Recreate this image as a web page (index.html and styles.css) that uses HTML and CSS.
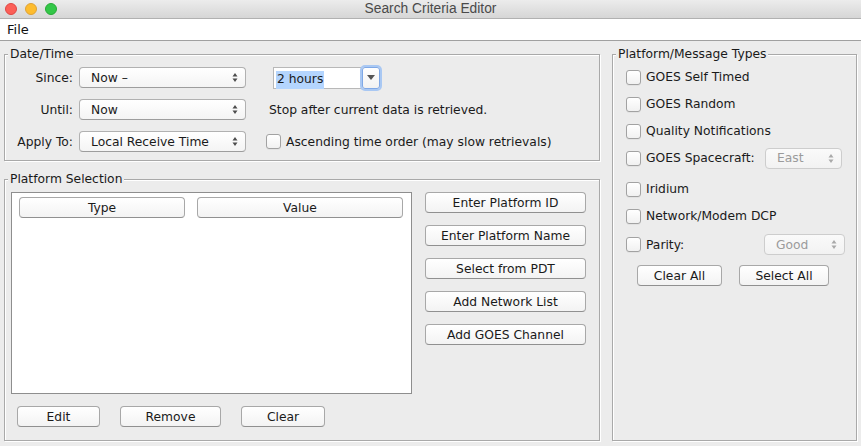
FILE: index.html
```html
<!DOCTYPE html>
<html>
<head>
<meta charset="utf-8">
<link rel="stylesheet" href="styles.css">
</head>
<body>
<div class="window">
  <div class="titlebar">
    <div class="lights">
      <span class="light red"></span><span class="light yellow"></span><span class="light green"></span>
    </div>
    <div class="title">Search Criteria Editor</div>
  </div>
  <div class="menubar"><span class="menu">File</span></div>
  <div class="content">
    <div class="left">
      <fieldset class="group datetime">
        <legend>Date/Time</legend>
        <div class="dt-grid">
          <span class="lbl">Since:</span>
          <div class="popup"><span>Now –</span><svg class="arr" viewBox="0 0 6 11" width="6" height="11"><path d="M0.5 4.5L3 1L5.5 4.5Z M0.5 6.5L3 10L5.5 6.5Z"/></svg></div>
          <div class="combo">
            <div class="combo-field"><span class="sel">2 hours</span></div>
            <div class="combo-btn"><svg viewBox="0 0 8 5" width="8" height="5"><path d="M0 0H8L4 5Z"/></svg></div>
          </div>

          <span class="lbl">Until:</span>
          <div class="popup"><span>Now</span><svg class="arr" viewBox="0 0 6 11" width="6" height="11"><path d="M0.5 4.5L3 1L5.5 4.5Z M0.5 6.5L3 10L5.5 6.5Z"/></svg></div>
          <span class="note">Stop after current data is retrieved.</span>

          <span class="lbl">Apply To:</span>
          <div class="popup"><span>Local Receive Time</span><svg class="arr" viewBox="0 0 6 11" width="6" height="11"><path d="M0.5 4.5L3 1L5.5 4.5Z M0.5 6.5L3 10L5.5 6.5Z"/></svg></div>
          <label class="check dt-check"><span class="box"></span><span>Ascending time order (may slow retrievals)</span></label>
        </div>
      </fieldset>

      <fieldset class="group platsel">
        <legend>Platform Selection</legend>
        <div class="ps-body">
          <div class="ps-left">
            <div class="table">
              <div class="thead">
                <div class="btn th type">Type</div>
                <div class="btn th value">Value</div>
              </div>
            </div>
            <div class="ps-actions">
              <div class="btn edit">Edit</div>
              <div class="btn remove">Remove</div>
              <div class="btn clear">Clear</div>
            </div>
          </div>
          <div class="ps-right">
            <div class="btn">Enter Platform ID</div>
            <div class="btn">Enter Platform Name</div>
            <div class="btn">Select from PDT</div>
            <div class="btn">Add Network List</div>
            <div class="btn">Add GOES Channel</div>
          </div>
        </div>
      </fieldset>
    </div>

    <fieldset class="group types">
      <legend>Platform/Message Types</legend>
      <div class="types-body">
        <label class="check row"><span class="box"></span><span>GOES Self Timed</span></label>
        <label class="check row"><span class="box"></span><span>GOES Random</span></label>
        <label class="check row"><span class="box"></span><span>Quality Notifications</span></label>
        <div class="row row-combo r-sc">
          <label class="check"><span class="box"></span><span>GOES Spacecraft:</span></label>
          <div class="popup disabled sc"><span>East</span><svg class="arr" viewBox="0 0 6 11" width="6" height="11"><path d="M0.5 4.5L3 1L5.5 4.5Z M0.5 6.5L3 10L5.5 6.5Z"/></svg></div>
        </div>
        <label class="check row"><span class="box"></span><span>Iridium</span></label>
        <label class="check row r-net"><span class="box"></span><span>Network/Modem DCP</span></label>
        <div class="row row-combo r-par">
          <label class="check"><span class="box"></span><span>Parity:</span></label>
          <div class="popup disabled par"><span>Good</span><svg class="arr" viewBox="0 0 6 11" width="6" height="11"><path d="M0.5 4.5L3 1L5.5 4.5Z M0.5 6.5L3 10L5.5 6.5Z"/></svg></div>
        </div>
        <div class="types-actions">
          <div class="btn clearall">Clear All</div>
          <div class="btn selectall">Select All</div>
        </div>
      </div>
    </fieldset>
  </div>
</div>
</body>
</html>
```

FILE: styles.css
```css
* { box-sizing: border-box; }
html, body { margin: 0; padding: 0; }
body {
  width: 861px;
  height: 446px;
  overflow: hidden;
  background: #ececec;
  font-family: "DejaVu Sans", sans-serif;
  font-size: 12.3px;
  color: #1a1a1a;
}
.window { width: 861px; height: 446px; display: flex; flex-direction: column; }

/* title bar */
.titlebar {
  height: 19px;
  flex: none;
  position: relative;
  background: linear-gradient(#ececec, #d6d6d6);
  border-bottom: 1px solid #b1b1b1;
  display: flex;
  align-items: center;
  justify-content: center;
}
.lights { position: absolute; left: 5px; top: 3px; display: flex; gap: 8px; }
.light { width: 12px; height: 12px; border-radius: 50%; display: block; }
.red { background: #fc5f57; border: 1px solid #df4744; }
.yellow { background: #fdbc2e; border: 1px solid #dea236; }
.green { background: #33c748; border: 1px solid #27aa35; }
.title {
  font-family: "Liberation Sans", Arial, sans-serif;
  font-size: 13.8px;
  color: #4a4a4a;
  line-height: 18px;
}

/* menu bar */
.menubar {
  height: 22px;
  flex: none;
  background: #fff;
  border-bottom: 1px solid #a0a0a0;
  padding-left: 7px;
  line-height: 21px;
  font-size: 13px;
  color: #111;
}

/* content */
.content {
  flex: 1;
  display: flex;
  padding: 6px 4px 5px 4px;
  gap: 12px;
}
.left { width: 596px; display: flex; flex-direction: column; }

.group {
  margin: 0;
  padding: 0;
  min-width: 0;
  border: 1px solid #a9a9a9;
  box-shadow: inset 1px 1px 0 #fff, 1px 1px 0 #fff;
}
.group legend {
  padding: 0 2px;
  margin-left: 3px;
  line-height: 14px;
  font-size: 12.3px;
  background: #ececec;
  color: #1a1a1a;
}

/* date/time */
.dt-grid {
  display: grid;
  grid-template-columns: 68px 173px auto;
  grid-auto-rows: 21px;
  row-gap: 11px;
  align-items: center;
  padding: 6px 0 8px 0;
}
.lbl { text-align: right; }
.popup {
  height: 21px;
  margin-left: 6px;
  border: 1px solid #b1b1b1;
  border-bottom-color: #9d9d9d;
  border-radius: 4px;
  background: linear-gradient(#ffffff, #f4f4f4);
  display: flex;
  align-items: center;
  justify-content: space-between;
  padding: 0 7px 0 11px;
}
.dt-grid .popup { width: 167px; }
.popup .arr { fill: #4d4d4d; }
.popup.disabled { color: #9b9b9b; border-color: #cdcdcd; background: linear-gradient(#fafafa, #f2f2f2); }
.popup.disabled .arr { fill: #a9a9a9; }

.combo { display: flex; margin-left: 27px; height: 22px; }
.combo-field {
  width: 89px;
  height: 22px;
  background: #fff;
  border: 1px solid #b8b8b8;
  border-right: none;
  padding: 3px 0 0 2px;
}
.sel { background: #b4d5fe; padding: 1px 1px 2px 1px; line-height: 15px; display: inline-block; }
.combo-btn {
  width: 18px;
  height: 22px;
  border: 1px solid #7fa8e6;
  border-radius: 3px;
  background: linear-gradient(#ffffff, #f2f2f2);
  box-shadow: 0 0 0 2px #a9c8f3;
  display: flex;
  align-items: center;
  justify-content: center;
}
.combo-btn svg { fill: #555; }
.note { margin-left: 23px; }

.check { display: flex; align-items: center; gap: 5px; }
.box {
  width: 15px;
  height: 15px;
  flex: none;
  border: 1px solid #a2a2a2;
  border-radius: 3px;
  background: linear-gradient(#ffffff, #f1f1f1);
  box-shadow: 0 1px 0 rgba(0,0,0,0.04);
}
.dt-check { margin-left: 20px; }

/* buttons */
.btn {
  height: 21px;
  border: 1px solid #a8a8a8;
  border-bottom-color: #909090;
  border-radius: 4px;
  background: linear-gradient(#ffffff, #f3f3f3);
  display: flex;
  align-items: center;
  justify-content: center;
  color: #1a1a1a;
  white-space: nowrap;
}

/* platform selection */
.platsel { margin-top: 11px; flex: 1; }
.ps-body { display: flex; padding: 6px 0 11px 6px; }
.ps-left { width: 401px; display: flex; flex-direction: column; }
.table {
  height: 202px;
  background: #fff;
  border: 1px solid #8e8e8e;
}
.thead { display: flex; gap: 12px; padding: 4px 0 0 7px; }
.th.type { width: 166px; }
.th.value { width: 206px; }
.ps-actions { display: flex; gap: 20px; margin-top: 12px; padding-left: 6px; }
.edit { width: 83px; }
.remove { width: 101px; }
.clear { width: 84px; }
.ps-right { width: 161px; margin-left: 13px; display: flex; flex-direction: column; gap: 12px; }

/* types */
.types { width: 245px; }
.types-body { display: flex; flex-direction: column; padding: 6px 0 0 13px; }
.row { height: 20px; margin-bottom: 7px; }
.row-combo { display: flex; align-items: center; justify-content: space-between; }
.r-sc { margin-bottom: 11px; }
.r-net { margin-bottom: 8px; }
.r-par { height: 21px; margin-bottom: 10px; }
.popup.sc { width: 77px; margin-right: 14px; }
.popup.par { width: 81px; margin-right: 11px; }
.types-actions { display: flex; gap: 17px; padding-left: 11px; }
.clearall { width: 85px; }
.selectall { width: 90px; }
```
